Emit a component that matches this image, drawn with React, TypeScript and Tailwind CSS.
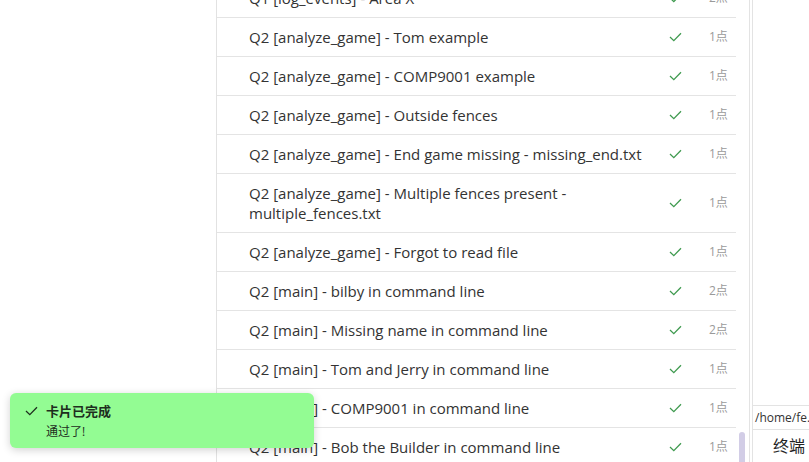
const rows: { text: string; pts: string }[] = [
  { text: "Q1 [log_events] - Area X", pts: "2点" },
  { text: "Q2 [analyze_game] - Tom example", pts: "1点" },
  { text: "Q2 [analyze_game] - COMP9001 example", pts: "1点" },
  { text: "Q2 [analyze_game] - Outside fences", pts: "1点" },
  { text: "Q2 [analyze_game] - End game missing - missing_end.txt", pts: "1点" },
  { text: "Q2 [analyze_game] - Multiple fences present - multiple_fences.txt", pts: "1点" },
  { text: "Q2 [analyze_game] - Forgot to read file", pts: "1点" },
  { text: "Q2 [main] - bilby in command line", pts: "2点" },
  { text: "Q2 [main] - Missing name in command line", pts: "2点" },
  { text: "Q2 [main] - Tom and Jerry in command line", pts: "1点" },
  { text: "Q2 [main] - COMP9001 in command line", pts: "1点" },
  { text: "Q2 [main] - Bob the Builder in command line", pts: "1点" },
];

function Check({ className = "" }: { className?: string }) {
  return (
    <svg width="13" height="10" viewBox="0 0 13 10" className={className}>
      <path d="M1 5 L4.8 8.6 L12 1.2" fill="none" stroke="currentColor" strokeWidth="1.3" />
    </svg>
  );
}

export default function App() {
  return (
    <div
      className="relative flex w-[809px] h-[462px] overflow-hidden bg-white text-[#333]"
      style={{ fontFamily: '"Open Sans", "Noto Sans CJK SC", sans-serif' }}
    >
      {/* left empty area */}
      <div className="w-[216px] shrink-0" />

      {/* test list */}
      <div className="w-[520px] shrink-0 border-l border-[#e2e2e2]">
        <div className="-mt-[21px]">
          {rows.map((r, i) => (
            <div key={i} className="flex items-center border-b border-[#e4e4e4]">
              <div className="flex-1 pl-[32px] pr-[10px] py-[9px] text-[15px] leading-[20px] text-[#333]">
                {r.text}
              </div>
              <div className="w-[40px] flex justify-center text-[#3f9a4f]">
                <Check />
              </div>
              <div className="w-[41px] pl-[14px] text-[12px] text-[#9a9a9a]">{r.pts}</div>
            </div>
          ))}
        </div>
      </div>

      {/* scrollbar gutter */}
      <div className="w-[13px] shrink-0 relative">
        <div className="absolute left-[3px] top-[432px] w-[6px] h-[40px] rounded-full bg-[#d2cde6]" />
      </div>

      <div className="w-[3px] shrink-0 border-l border-[#e3e3e3]" />

      {/* right pane */}
      <div className="flex-1 flex flex-col border-l border-[#e3e3e3]">
        <div className="h-[407px] border-b border-[#e3e3e3]" />
        <div className="h-[23px] pl-[2px] text-[12px] leading-[24px] whitespace-nowrap overflow-hidden text-[#333]">
          /home/fe.py
        </div>
        <div className="flex-1 border-t border-[#e3e3e3] pl-[20px] text-[16px] leading-[32px] text-[#222]">
          终端
        </div>
      </div>

      {/* toast */}
      <div className="absolute left-[10px] top-[393px] w-[304px] h-[55px] rounded-[6px] bg-[#93fc93] shadow-[0_2px_8px_rgba(0,0,0,0.18)] px-[15px] pt-[9px]">
        <div className="flex items-center text-[#1e2e1e]">
          <Check className="mr-[8px]" />
          <span className="text-[13px] font-bold leading-[18px]">卡片已完成</span>
        </div>
        <div className="pl-[21px] mt-[3px] text-[12px] leading-[17px] text-[#1e2e1e]">通过了!</div>
      </div>
    </div>
  );
}
